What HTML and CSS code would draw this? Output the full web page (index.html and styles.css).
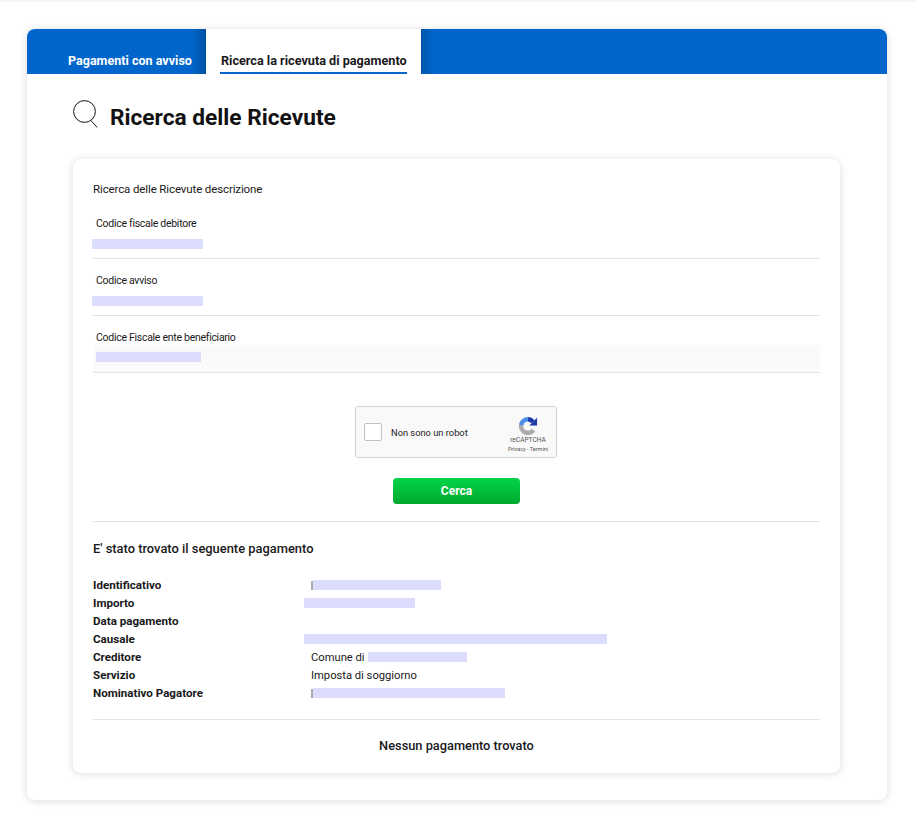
FILE: index.html
```html
<!DOCTYPE html>
<html lang="it">
<head>
<meta charset="utf-8">
<title>Ricerca delle Ricevute</title>
<link rel="stylesheet" href="styles.css">
</head>
<body>
<div class="topline"></div>
<main class="panel">
  <nav class="tabs">
    <a class="tab">Pagamenti con avviso</a>
    <a class="tab tab-active"><span>Ricerca la ricevuta di pagamento</span></a>
    <div class="tab-rest"></div>
  </nav>
  <div class="panel-body">
    <header class="title-row">
      <svg class="search-icon" width="26" height="28" viewBox="0 0 26 28" fill="none" stroke="#111" stroke-width="1"><circle cx="11.5" cy="11.5" r="10.9"/><path d="M18 20.5l6.2 7" /></svg>
      <h1>Ricerca delle Ricevute</h1>
    </header>
    <section class="card">
      <p class="desc">Ricerca delle Ricevute descrizione</p>
      <div class="field"><label>Codice fiscale debitore</label><div class="input"><span class="mask mask-out"></span></div></div>
      <div class="field"><label>Codice avviso</label><div class="input"><span class="mask mask-out"></span></div></div>
      <div class="field"><label>Codice Fiscale ente beneficiario</label><div class="input input-off"><span class="mask mask-in"></span></div></div>

      <div class="captcha">
        <span class="check"></span>
        <span class="robot">Non sono un robot</span>
        <div class="brand">
          <svg width="20" height="20" viewBox="0 0 22 22" fill="none" stroke-width="5"><path d="M3.5 10 A7.5 7.5 0 0 0 17 15.5" stroke="#ababab"/><path d="M3.5 10 A7.5 7.5 0 0 1 11 3.5" stroke="#4a90e8"/><path d="M11 3.5 A7.5 7.5 0 0 1 16.5 6.5" stroke="#1c3aa9"/><path d="M12.5 10.5 H21 V2z" fill="#1c3aa9"/></svg>
          <span class="brand-name">reCAPTCHA</span>
          <span class="brand-links">Privacy - Termini</span>
        </div>
      </div>
      <div class="actions"><button class="btn">Cerca</button></div>

      <h2>E' stato trovato il seguente pagamento</h2>
      <dl class="details">
        <dt>Identificativo</dt><dd><span class="tick"></span><span class="mask m-id"></span></dd>
        <dt>Importo</dt><dd><span class="mask m-imp"></span></dd>
        <dt>Data pagamento</dt><dd></dd>
        <dt>Causale</dt><dd><span class="mask m-cau"></span></dd>
        <dt>Creditore</dt><dd>Comune di <span class="mask m-cre"></span></dd>
        <dt>Servizio</dt><dd>Imposta di soggiorno</dd>
        <dt>Nominativo Pagatore</dt><dd><span class="tick"></span><span class="mask m-nom"></span></dd>
      </dl>
      <p class="none">Nessun pagamento trovato</p>
    </section>
  </div>
</main>
</body>
</html>
```

FILE: styles.css
```css
* { box-sizing: border-box; }
html, body { margin: 0; padding: 0; }
body {
  background: #fff;
  font-family: Roboto, "Noto Sans", sans-serif;
  color: #19191a;
  height: 822px;
  overflow: hidden;
}
.topline { height: 3px; background: linear-gradient(#f3f3f3, #fff); }
.panel {
  margin: 26px 29px 0 27px;
  width: 860px;
  height: 771px;
  background: #fff;
  border-radius: 8px;
  box-shadow: 0 1px 8px rgba(0,0,0,.14);
}
.tabs {
  display: flex;
  height: 45px;
  background: #0066cc;
  border-radius: 8px 8px 0 0;
}
.tab {
  font-size: 12.55px;
  font-weight: 700;
  color: #fff;
  padding: 24px 14px 0 41px;
  width: 179px;
  white-space: nowrap;
  background: linear-gradient(90deg, rgba(0,0,0,0) 92%, rgba(0,0,0,.22) 100%);
  line-height: 16px;
}
.tab-active {
  width: 215px;
  font-size: 12.65px;
  background: #fff;
  color: #19191a;
  padding: 24px 14px 0 14px;
}
.tab-active span {
  display: block;
  height: 21px;
  padding-left: 1px;
  border-bottom: 2px solid #0066cc;
}
.tab-rest {
  flex: 1;
  border-radius: 0 8px 0 0;
  background: linear-gradient(90deg, rgba(0,0,0,.16), rgba(0,0,0,0) 14px);
}
.panel-body { padding: 0 47px 0 46px; }
.title-row {
  display: flex;
  align-items: center;
  gap: 11px;
  height: 85px;
}
.search-icon { margin-top: -6px; }
h1 { margin: 2px 0 0; font-size: 22.7px; font-weight: 700; color: #111; }
.card {
  height: 614px;
  background: #fff;
  border-radius: 8px;
  box-shadow: 0 1px 8px rgba(0,0,0,.14);
  padding: 20px 20px 0;
}
.desc { margin: 0 0 3px; font-size: 11.5px; letter-spacing: -.12px; line-height: 20px; }
.field { height: 57px; padding-top: 14px; border-bottom: 1px solid #e3e3e3; }
.field label { display: block; padding-left: 3px; font-size: 10.5px; letter-spacing: -.28px; line-height: 16px; height: 15px; color: #19191a; }
.input { height: 27px; display: flex; align-items: flex-start; }
.input-off { background: #fafafa; }
.mask { display: inline-block; height: 10px; background: #dcdcff; vertical-align: middle; }
.mask-out { width: 111px; margin: 8px 0 0 -1px; }
.mask-in { width: 105px; margin: 7px 0 0 3px; }
.captcha {
  display: flex;
  align-items: center;
  width: 202px;
  height: 52px;
  margin: 33px 0 0 262px;
  background: #f9f9f9;
  border: 1px solid #d3d3d3;
  border-radius: 3px;
  padding-left: 8px;
}
.check { width: 18px; height: 18px; background: #fff; border: 1px solid #c1c1c1; border-radius: 2px; }
.robot { margin-left: 9px; font-family: Roboto, sans-serif; font-size: 9.3px; color: #222; flex: 1; }
.brand { width: 56px; display: flex; flex-direction: column; align-items: center; padding-top: 4px; }
.brand svg { display: block; }
.brand-name { font-family: Roboto, sans-serif; font-size: 6.6px; line-height: 9px; color: #555; }
.brand-links { font-family: Roboto, sans-serif; font-size: 5.5px; line-height: 8px; color: #555; }
.actions {
  display: flex;
  justify-content: center;
  padding: 20px 0 17px;
  border-bottom: 1px solid #e3e3e3;
}
.btn {
  width: 127px;
  height: 26px;
  border: 0;
  border-radius: 4px;
  background: linear-gradient(#03d44a, #00a82c);
  color: #fff;
  font: 700 12px Roboto, sans-serif;
}
h2 { margin: 18px 0 0; font-size: 12.9px; font-weight: 500; line-height: 18px; color: #19191a; }
.details {
  display: grid;
  grid-template-columns: 218px 1fr;
  grid-auto-rows: 18px;
  margin: 19px 0 0;
  padding-bottom: 16px;
  border-bottom: 1px solid #e3e3e3;
  font-size: 11.2px;
  line-height: 18px;
}
dt { font-weight: 700; font-size: 11.6px; margin-top: -1px; }
dd { margin: 0; white-space: nowrap; }
dd .mask, dd .tick { margin-top: -2px; }
.tick { display: inline-block; width: 2px; height: 9px; background: #aaa; vertical-align: middle; }
.m-id { width: 128px; }
.m-imp { width: 111px; margin-left: -7px; }
.m-cau { width: 303px; margin-left: -7px; }
.m-cre { width: 99px; margin-left: 1px; }
.m-nom { width: 192px; }
.none { margin: 17px 0 0; text-align: center; font-size: 12.8px; font-weight: 500; line-height: 18px; }
```
